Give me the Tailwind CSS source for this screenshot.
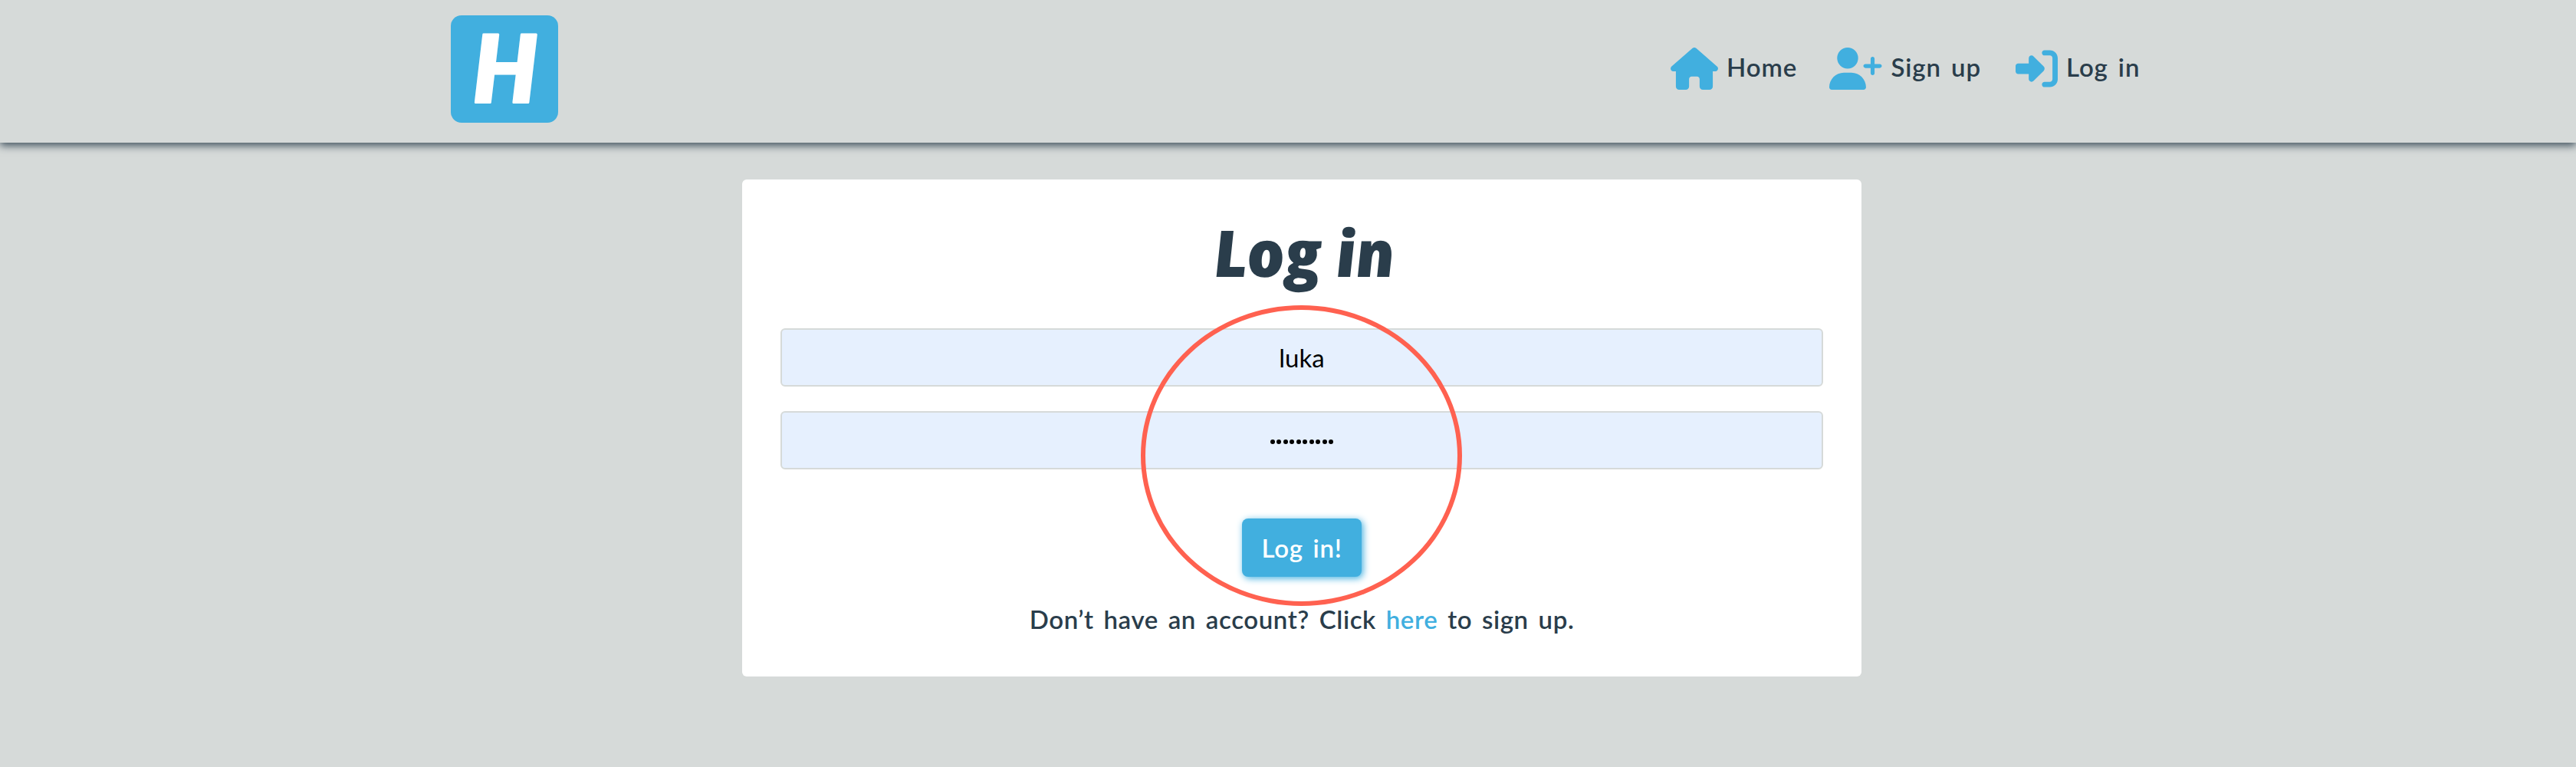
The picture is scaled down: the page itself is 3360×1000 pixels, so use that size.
<!DOCTYPE html>
<html lang="en">
<head>
<meta charset="utf-8">
<title>Log in</title>
<script src="https://cdn.jsdelivr.net/npm/@tailwindcss/browser@4"></script>
</head>
<body class="min-h-screen bg-[#d6dad9] font-['Lato',sans-serif] text-[33px] font-semibold leading-[40px] text-[#2a3d4b] overflow-hidden">
  <header class="relative flex h-[186px] items-start justify-between bg-[#d6dad9] pl-[588px] pr-[567px] pt-5 shadow-[0_4px_10px_#2a3d4bd9]">
    <a class="flex size-[140px] items-center justify-center rounded-[14px] bg-[#41afdf]" aria-label="Home">
      <svg class="size-[140px]" viewBox="0 0 140 140"><text x="71" y="114" text-anchor="middle" font-family="Lato, sans-serif" font-style="italic" font-weight="800" font-size="122" fill="#fff" stroke="#fff" stroke-width="3" stroke-linejoin="round" textLength="84" lengthAdjust="spacingAndGlyphs">H</text></svg>
    </a>
    <nav class="flex items-start pt-[42px] tracking-[0.9px] [word-spacing:4px]">
      <a class="flex w-[207px] gap-[11px]">
        <svg class="h-[55px] w-[62px] shrink-0" viewBox="0 0 576 512" fill="#41afdf"><path d="M575.8 255.5c0 18-15 32.1-32 32.1h-32l.7 160.2c0 2.7-.2 5.4-.5 8.100V472c0 22.100-17.900 40-40 40H456c-1.100 0-2.200 0-3.300-.1c-1.400 .1-2.800 .1-4.200 .1H392c-22.100 0-40-17.900-40-40V384c0-17.700-14.300-32-32-32H256c-17.700 0-32 14.300-32 32v88c0 22.100-17.900 40-40 40H104c-22.100 0-40-17.900-40-40V287.600H32c-18 0-32-14-32-32.100c0-9 3-17 10-24L266.400 8c7-7 15-8 22-8s15 2 21 7L564.800 231.500c8 7 12 15 11 24z"/></svg>
        <span class="whitespace-nowrap pt-[5px]">Home</span>
      </a>
      <a class="flex w-[243px] gap-[12px]">
        <svg class="h-[55px] w-[68.500px] shrink-0" viewBox="0 0 640 512" fill="#41afdf"><path d="M96 128a128 128 0 1 1 256 0A128 128 0 1 1 96 128zM0 482.300C0 383.800 79.800 304 178.300 304h91.400C368.200 304 448 383.800 448 482.300c0 16.400-13.300 29.700-29.700 29.700H29.700C13.300 512 0 498.700 0 482.300zM504 312V248H440c-13.300 0-24-10.700-24-24s10.700-24 24-24h64V136c0-13.300 10.700-24 24-24s24 10.700 24 24v64h64c13.300 0 24 10.700 24 24s-10.700 24-24 24H552v64c0 13.300-10.700 24-24 24s-24-10.700-24-24z"/></svg>
        <span class="whitespace-nowrap pt-[5px]">Sign up</span>
      </a>
      <a class="flex w-[164px] gap-[11px]">
        <svg class="h-[55px] w-[55px] shrink-0" viewBox="0 0 512 512" fill="#41afdf"><path d="M217.900 105.900L340.700 228.700c7.200 7.200 11.300 17.100 11.300 27.300s-4.100 20.100-11.300 27.300L217.900 406.100c-6.400 6.400-15 9.900-24 9.900c-18.700 0-33.900-15.200-33.900-33.900V320H32c-17.700 0-32-14.300-32-32V224c0-17.700 14.300-32 32-32H160V129.900c0-18.700 15.200-33.900 33.900-33.900c9 0 17.600 3.600 24 9.900zM352 416h64c17.700 0 32-14.300 32-32V128c0-17.700-14.300-32-32-32H352c-17.700 0-32-14.300-32-32s14.300-32 32-32h64c53 0 96 43 96 96V384c0 53-43 96-96 96H352c-17.700 0-32-14.300-32-32s14.300-32 32-32z"/></svg>
        <span class="whitespace-nowrap pt-[5px]">Log in</span>
      </a>
    </nav>
  </header>

  <main class="relative ml-[968px] mt-12 flex h-[648px] w-[1460px] flex-col items-center rounded-[6px] bg-white px-[50px] pt-[46px]">
    <h1 class="h-[100px] skew-x-[6deg] whitespace-nowrap pl-[3px] font-['Open_Sans',sans-serif] text-[84px] font-extrabold italic leading-[98px] tracking-[-1.500px]">Log in</h1>
    <form class="mt-12 flex w-full flex-col items-center gap-8">
      <input type="text" value="luka" class="h-[76px] w-full rounded-[6px] border-2 border-[#d6dad9] bg-[#e6f0fe] text-center font-normal text-black">
      <div class="flex h-[76px] w-full items-center justify-center gap-[2.500px] rounded-[6px] border-2 border-[#d6dad9] bg-[#e6f0fe] pt-[3px]">
        <i class="size-[6px] rounded-full bg-black"></i><i class="size-[6px] rounded-full bg-black"></i><i class="size-[6px] rounded-full bg-black"></i><i class="size-[6px] rounded-full bg-black"></i><i class="size-[6px] rounded-full bg-black"></i><i class="size-[6px] rounded-full bg-black"></i><i class="size-[6px] rounded-full bg-black"></i><i class="size-[6px] rounded-full bg-black"></i><i class="size-[6px] rounded-full bg-black"></i><i class="size-[6px] rounded-full bg-black"></i>
      </div>
      <button type="button" class="mt-8 h-[76px] w-[156px] rounded-[8px] bg-[#41afdf] text-white tracking-[0.7px] [word-spacing:4px] shadow-[2px_2px_10px_#41afdf]">Log in!</button>
    </form>
    <p class="mt-[35px] whitespace-nowrap tracking-[0.6px] [word-spacing:4px]">Don’t have an account? Click <a class="text-[#41afdf]">here</a> to sign up.</p>
    <div class="pointer-events-none absolute left-[520px] top-[164px] h-[392px] w-[419px] rounded-[50%] border-6 border-[#ff6150]"></div>
  </main>
</body>
</html>
